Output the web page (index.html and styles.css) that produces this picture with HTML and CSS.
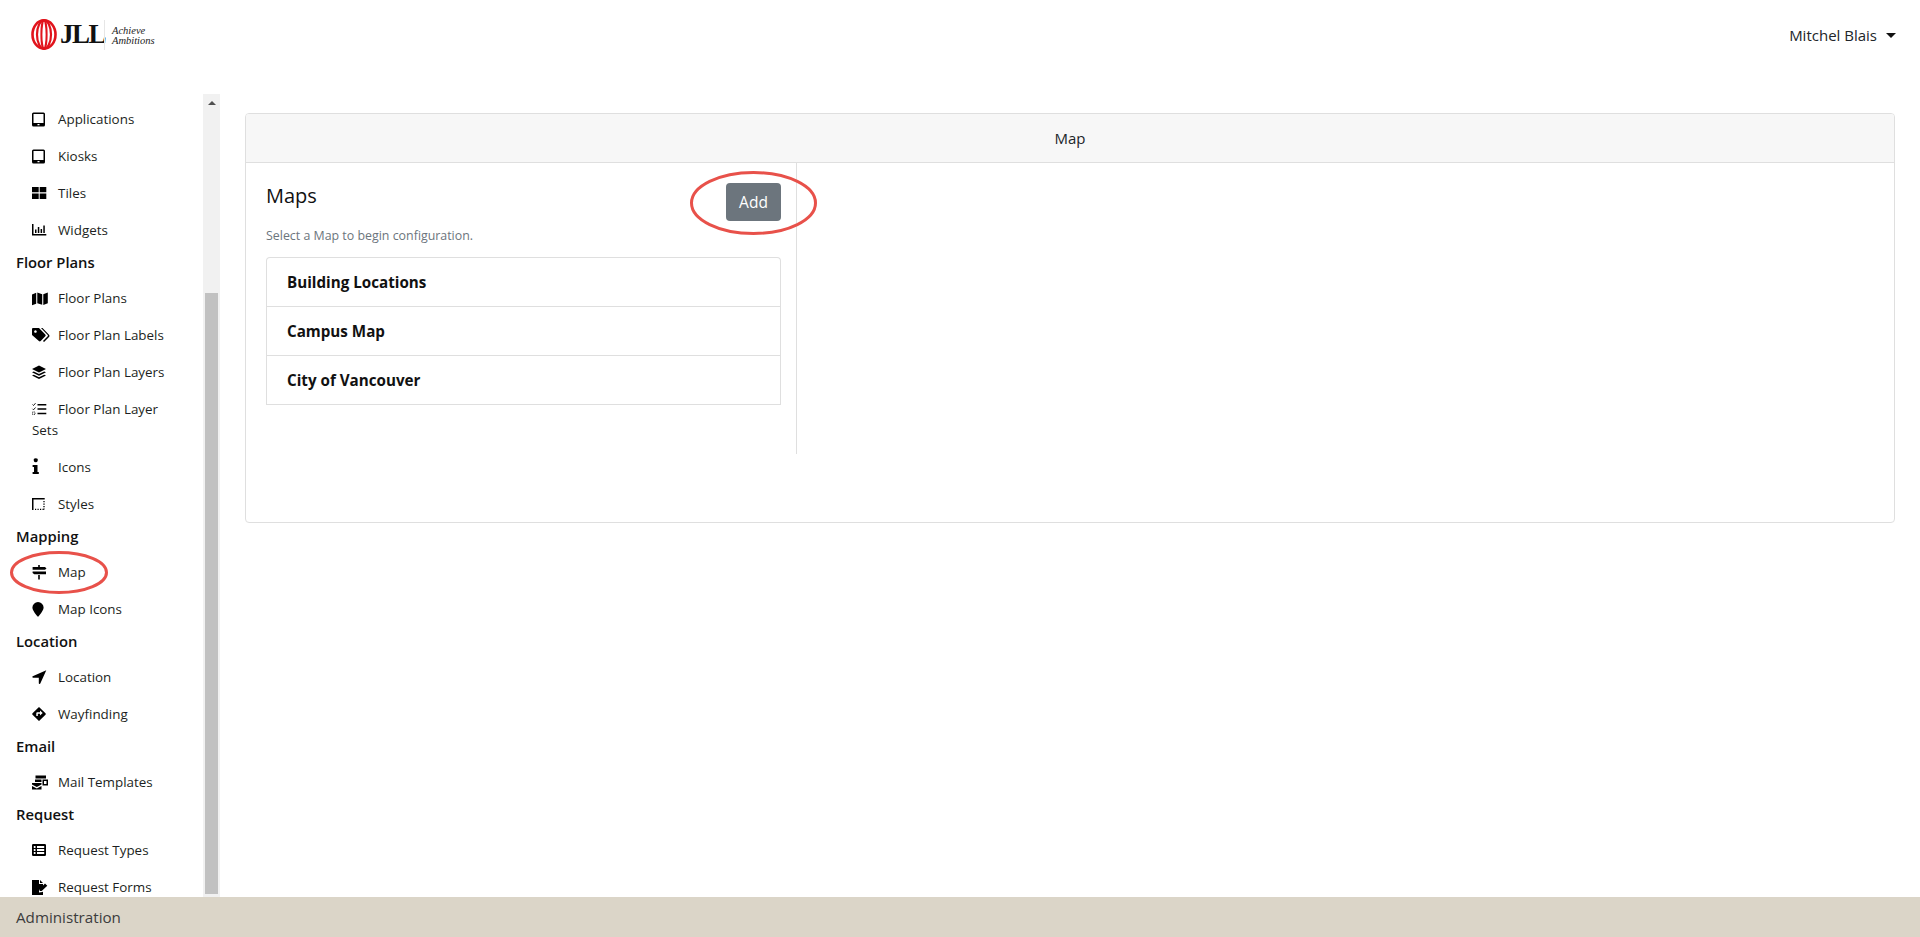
FILE: index.html
```html
<!DOCTYPE html>
<html lang="en">
<head>
<meta charset="utf-8">
<title>Map</title>
<link rel="stylesheet" href="styles.css">
</head>
<body>
<div class="app">
  <header class="topbar">
    <div class="logo">
      <svg class="emblem" viewBox="0 0 26 31" aria-hidden="true">
        <g fill="none" stroke="#e1141c">
          <ellipse cx="13" cy="15.5" rx="11.5" ry="14.2" stroke-width="2.6"/>
          <ellipse cx="13" cy="15.5" rx="7" ry="14.2" stroke-width="2.200"/>
          <ellipse cx="13" cy="15.5" rx="2.600" ry="14.2" stroke-width="2"/>
        </g>
      </svg>
      <span class="wordmark">JLL</span>
      <span class="logo-rule"></span>
      <span class="tagline"><span>Achieve</span><span>Ambitions</span></span>
    </div>
    <div class="user"><span>Mitchel Blais</span><i class="caret"></i></div>
  </header>

  <div class="main">
    <aside class="sidebar">
      <nav class="nav">
        <a class="nav-item"><svg class="ico" viewBox="0 0 16 16"><path fill-rule="evenodd" d="M1.500 1.500h10a1.500 1.500 0 0 1 1.500 1.500v11a1.500 1.500 0 0 1-1.500 1.500h-10A1.500 1.500 0 0 1 0 14V3a1.500 1.500 0 0 1 1.500-1.500zM1.500 3v9h10V3zM5.500 13v1.300h2V13z"/></svg>Applications</a>
        <a class="nav-item"><svg class="ico" viewBox="0 0 16 16"><path fill-rule="evenodd" d="M1.500 1.500h10a1.500 1.500 0 0 1 1.500 1.500v11a1.500 1.500 0 0 1-1.500 1.500h-10A1.500 1.500 0 0 1 0 14V3a1.500 1.500 0 0 1 1.500-1.500zM1.500 3v9h10V3zM5.500 13v1.300h2V13z"/></svg>Kiosks</a>
        <a class="nav-item"><svg class="ico" viewBox="0 0 16 16"><path d="M0 2h6.700v5.300H0zM7.700 2h6.600v5.300H7.700zM0 8.500h6.700v5.500H0zM7.700 8.500h6.600v5.500H7.700z"/></svg>Tiles</a>
        <a class="nav-item"><svg class="ico" viewBox="0 0 16 16"><path d="M0 2h1.500v10h12.800v1.600H0zM3 7.500h1.500V11H3zM5.800 5h1.500v6H5.800zM8.600 7h1.500v4H8.600zM11.300 3.500h1.500V11h-1.500z"/></svg>Widgets</a>

        <h6 class="nav-head">Floor Plans</h6>
        <a class="nav-item"><svg class="ico" viewBox="0 0 16 16"><path d="M0 4.500 4.200 2.700v11L0 15.300zM5.300 2.500l4.900 1.700v10.500l-4.900-1.500zM11.300 4.200 15.800 2.500v10.800l-4.500 1.600z"/></svg>Floor Plans</a>
        <a class="nav-item"><svg class="ico" viewBox="0 0 16 16"><path fill-rule="evenodd" d="M0 2a1 1 0 0 1 1-1h6l6.300 6.500a1.300 1.300 0 0 1 0 1.800l-4.600 4.800a1.300 1.300 0 0 1-1.800 0L0 8zM3.400 3.200a1.300 1.300 0 1 0 .1 0z"/><path d="M9 1h1.500l6.500 6.700a1.700 1.700 0 0 1 0 2.400l-5 5-1-1 4.700-4.900a1 1 0 0 0 0-1.300z"/></svg>Floor Plan Labels</a>
        <a class="nav-item"><svg class="ico" viewBox="0 0 16 16"><path d="M7 1.500 14 5 7 8.500 0 5zM1.800 7.400 7 10l5.200-2.600L14 8.300l-7 3.500-7-3.500zM1.800 10.700 7 13.200l5.200-2.500 1.800.9-7 3.400-7-3.400z"/></svg>Floor Plan Layers</a>
        <a class="nav-item"><svg class="ico" viewBox="0 0 16 16"><path d="M5.500 3h8.800v1.500H5.500zM5.500 7.300h8.800v1.500H5.500zM5.500 11.700h8.800v1.500H5.500z"/><path d="M.5 3.500l1 1 2-2.300M.5 7.800l1 1 2-2.300" fill="none" stroke="#000" stroke-width=".9"/><path d="M.5 11h2.500v2.500H.5z" fill="none" stroke="#000" stroke-width=".8" stroke-dasharray="1 .7"/></svg>Floor Plan Layer Sets</a>
        <a class="nav-item"><svg class="ico" viewBox="0 0 16 16"><path d="M1.800 1.800a2 2 0 1 1 3.900 0 2 2 0 0 1-3.900 0zM.6 6h4.900v7h1.300v2H.6v-2H2V8H.6z"/></svg>Icons</a>
        <a class="nav-item"><svg class="ico" viewBox="0 0 16 16"><path d="M0 2h12.700v1.500H1.500v10.500H0z"/><path d="M12 5v8.500M3 13.300h9" fill="none" stroke="#000" stroke-width="1.300" stroke-dasharray="1.200 1.300"/></svg>Styles</a>

        <h6 class="nav-head">Mapping</h6>
        <a class="nav-item"><svg class="ico" viewBox="0 0 16 16"><path d="M6.200 1h1.600v2H13l1.500 1.400L13 5.800H.6V3h5.600zM.6 7.500H14v2.800H2.300L.6 8.900zM6.200 11h1.600v4.500H6.200z"/></svg>Map</a>
        <a class="nav-item"><svg class="ico" viewBox="0 0 16 16"><path d="M6 1a5.600 5.600 0 0 1 5.600 5.600c0 2.600-3.200 6.700-4.800 8.500a1 1 0 0 1-1.600 0C3.600 13.300.4 9.200.4 6.600A5.600 5.600 0 0 1 6 1z"/></svg>Map Icons</a>

        <h6 class="nav-head">Location</h6>
        <a class="nav-item"><svg class="ico" viewBox="0 0 16 16"><path d="M14.300 1.300 8.300 14.500a.8.800 0 0 1-1.500-.3V8.700H1.100A.8.800 0 0 1 .7 7.200z"/></svg>Location</a>
        <a class="nav-item"><svg class="ico" viewBox="0 0 16 16"><path fill-rule="evenodd" d="M7 1l6.500 6.300a1 1 0 0 1 0 1.400L7 15 .5 8.700a1 1 0 0 1 0-1.400zM8 4.500v1.800H5.300a1 1 0 0 0-1 1V10h1.500V7.800H8v1.800l2.700-2.500z"/></svg>Wayfinding</a>

        <h6 class="nav-head">Email</h6>
        <a class="nav-item"><svg class="ico" viewBox="0 0 16 16"><path d="M3.500 1.500h10.500v3H3.500zM3 5.500h6.500V8H3zM0 9h9.500v1.500L4.800 13 0 10.500zM0 12l4.800 2.500L9.500 12v3.500H0z"/><path fill-rule="evenodd" d="M10.500 5.500H16v6h-5.500zM12 7v3h2.500V7z"/></svg>Mail Templates</a>

        <h6 class="nav-head">Request</h6>
        <a class="nav-item"><svg class="ico" viewBox="0 0 16 16"><path fill-rule="evenodd" d="M1.300 2h11.400A1.300 1.300 0 0 1 14 3.300v9.400a1.300 1.300 0 0 1-1.300 1.300H1.300A1.300 1.300 0 0 1 0 12.700V3.300A1.300 1.300 0 0 1 1.300 2zM1.800 4v2h1.700V4zM5 4v2h7.200V4zM1.800 7v2h1.700V7zM5 7v2h7.200V7zM1.800 10v2h1.700v-2zM5 10v2h7.200v-2z"/></svg>Request Types</a>
        <a class="nav-item"><svg class="ico" viewBox="0 0 16 16"><path d="M0 1h7v4h4v1.500L7 11v2.500l3.500-.5.500-.5V16H0zM8 1l3 3H8zM13 4.500l2.300 2.200L9.700 12H7.600v-2z"/></svg>Request Forms</a>
      </nav>
      <div class="scrollbar">
        <i class="scroll-arrow"></i>
        <div class="scroll-thumb"></div>
      </div>
    </aside>

    <main class="content">
      <section class="card">
        <div class="card-header">Map</div>
        <div class="card-body">
          <div class="maps-col">
            <div class="maps-head">
              <h5 class="maps-title">Maps</h5>
              <button class="btn-add" type="button">Add</button>
            </div>
            <p class="maps-hint">Select a Map to begin configuration.</p>
            <ul class="list">
              <li class="list-item">Building Locations</li>
              <li class="list-item">Campus Map</li>
              <li class="list-item">City of Vancouver</li>
            </ul>
          </div>
        </div>
      </section>
    </main>
  </div>

  <footer class="footer">Administration</footer>
</div>

<svg class="mark mark-map" viewBox="0 0 98 43" aria-hidden="true"><ellipse cx="49" cy="21.500" rx="47.500" ry="20"/></svg>
<svg class="mark mark-add" viewBox="0 0 127 64" aria-hidden="true"><ellipse cx="63.500" cy="32" rx="62" ry="30.500"/></svg>
</body>
</html>
```
FILE: styles.css
```css
* { box-sizing: border-box; }
html, body { height: 100%; }
body {
  margin: 0;
  overflow: hidden;
  background: #fff;
  color: #212529;
  font-family: "Open Sans", "Noto Sans", "Liberation Sans", sans-serif;
  font-size: 13.4px;
}
.app { display: flex; flex-direction: column; height: 937px; }

.topbar {
  flex: 0 0 94px;
  display: flex;
  justify-content: space-between;
  align-items: flex-start;
  padding: 19px 24px 0 31px;
}
.logo { display: flex; align-items: center; height: 31px; }
.emblem { width: 26px; height: 31px; display: block; }
.wordmark {
  width: 39px;
  margin-left: 3px;
  font-family: "Liberation Serif", serif;
  font-weight: 700;
  font-size: 27px;
  letter-spacing: -1.5px;
  color: #111;
  line-height: 31px;
}
.logo-rule { width: 1px; height: 30px; margin: 0 7px 0 5px; background: #e6e6e6; }
.tagline {
  display: flex;
  flex-direction: column;
  padding-top: 2px;
  font-family: "Liberation Serif", serif;
  font-style: italic;
  font-size: 10.500px;
  line-height: 10px;
  color: #222;
}
.user { display: flex; align-items: center; height: 32px; font-size: 15px; color: #212529; }
.caret {
  width: 0; height: 0; margin-left: 9px;
  border: 5px solid transparent;
  border-top-color: #111;
  border-bottom-width: 0;
}

.main { flex: 1; min-height: 0; display: flex; }
.sidebar { flex: 0 0 220px; display: flex; min-height: 0; }
.nav { flex: 0 0 203px; overflow: hidden; padding: 6.500px 30px 0 16px; }
.nav-item {
  display: block;
  padding: 8px 0 8px 16px;
  line-height: 21px;
  color: #1c1f22;
}
.nav-head {
  margin: 0;
  padding: 1px 0 6px;
  font-size: 14.800px;
  font-weight: 600;
  line-height: 24px;
  color: #111;
}
.ico {
  display: inline-block;
  width: 16px;
  height: 16px;
  margin-right: 10px;
  vertical-align: -3px;
  overflow: visible;
  fill: #000;
}
.scrollbar {
  flex: 0 0 17px;
  background: #f1f1f1;
  display: flex;
  flex-direction: column;
  align-items: center;
  padding-bottom: 3px;
}
.scroll-arrow {
  margin-top: 7px;
  width: 0; height: 0;
  border: 4px solid transparent;
  border-bottom-color: #505050;
  border-top-width: 0;
}
.scroll-thumb { margin-top: 188px; width: 13px; flex: 1; background: #c1c1c1; }

.content { flex: 1; min-width: 0; padding: 19px 25px 0; }
.card {
  height: 410px;
  border: 1px solid #dfdfdf;
  border-radius: 4px;
  display: flex;
  flex-direction: column;
}
.card-header {
  flex: 0 0 49px;
  display: flex;
  align-items: center;
  justify-content: center;
  background: #f7f7f7;
  border-bottom: 1px solid #dfdfdf;
  border-radius: 3px 3px 0 0;
  font-size: 15px;
  color: #212529;
}
.card-body { flex: 1; }
.maps-col {
  width: 551px;
  height: 291px;
  padding: 20px 15px 0 20px;
  border-right: 1px solid #dfdfdf;
}
.maps-head { display: flex; justify-content: space-between; align-items: flex-start; }
.maps-title { margin: 0; font-size: 20px; font-weight: 500; line-height: 25px; color: #111; }
.btn-add {
  width: 55px;
  height: 38px;
  padding: 0;
  border: 0;
  border-radius: 4px;
  background: #6c757d;
  color: #fff;
  font: inherit;
  font-size: 15.500px;
}
.maps-hint { margin: 3px 0 0; font-size: 12.400px; line-height: 24px; color: #6c757d; }
.list {
  list-style: none;
  margin: 9px 0 0;
  padding: 0;
  border: 1px solid #dfdfdf;
  border-bottom: 0;
  border-radius: 4px 4px 0 0;
}
.list-item {
  height: 49px;
  padding-left: 20px;
  display: flex;
  align-items: center;
  border-bottom: 1px solid #dfdfdf;
  font-size: 15.200px;
  font-weight: 700;
  color: #111;
}
.footer {
  flex: 0 0 40px;
  display: flex;
  align-items: center;
  padding-left: 16px;
  background: #dbd5c8;
  font-size: 15.200px;
  color: #3c3c3c;
}

.mark { position: absolute; fill: none; stroke: #e8514a; stroke-width: 3; }
.mark-map { left: 10px; top: 551px; width: 98px; height: 43px; }
.mark-add { left: 690px; top: 171px; width: 127px; height: 64px; }
```
